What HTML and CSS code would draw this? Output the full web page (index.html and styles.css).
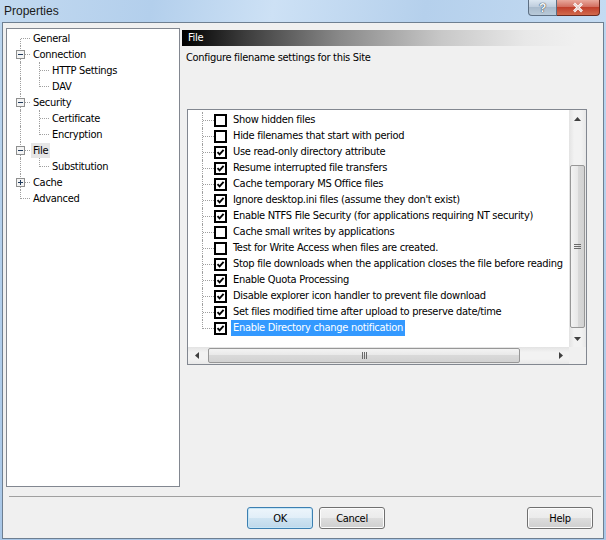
FILE: index.html
```html
<!DOCTYPE html>
<html lang="en">
<head>
    <meta charset="UTF-8">
    <title>Properties</title>
    <link rel="stylesheet" href="styles.css">
</head>
<body>
    <div class="window">
        <!-- Title bar -->
        <div class="titlebar">
            <span class="title">Properties</span>
            <div class="caption">
                <span class="cap cap-help">?</span>
                <span class="cap cap-close">
                    <svg width="14" height="11" viewBox="0 0 14 11"><path d="M3 1.5L11 9.5M11 1.5L3 9.5" stroke="#fff" stroke-width="2.6"/><path d="M3 1.5L11 9.5M11 1.5L3 9.5" stroke="#8a2b1c" stroke-width="1" opacity="0.35"/></svg>
                </span>
            </div>
        </div>

        <div class="client">
            <div class="main">
                <!-- Category tree -->
                <div class="tree">
                    <div class="row"><span class="g first"></span><span class="label">General</span></div>
                    <div class="row">
                        <svg class="exp" width="19" height="16" viewBox="0 0 19 16"><path class="dots" d="M9.5 0V4M9.5 13V16M14 8.5H19"/><rect x="5.5" y="4.5" width="8" height="8" class="box"/><path d="M7 8.5H12" stroke="#1f3a5c"/></svg>
                        <span class="label">Connection</span>
                    </div>
                    <div class="row"><span class="g pipe"></span><span class="g tee"></span><span class="label">HTTP Settings</span></div>
                    <div class="row"><span class="g pipe"></span><span class="g elbow"></span><span class="label">DAV</span></div>
                    <div class="row">
                        <svg class="exp" width="19" height="16" viewBox="0 0 19 16"><path class="dots" d="M9.5 0V4M9.5 13V16M14 8.5H19"/><rect x="5.5" y="4.5" width="8" height="8" class="box"/><path d="M7 8.5H12" stroke="#1f3a5c"/></svg>
                        <span class="label">Security</span>
                    </div>
                    <div class="row"><span class="g pipe"></span><span class="g tee"></span><span class="label">Certificate</span></div>
                    <div class="row"><span class="g pipe"></span><span class="g elbow"></span><span class="label">Encryption</span></div>
                    <div class="row">
                        <svg class="exp" width="19" height="16" viewBox="0 0 19 16"><path class="dots" d="M9.5 0V4M9.5 13V16M14 8.5H19"/><rect x="5.5" y="4.5" width="8" height="8" class="box"/><path d="M7 8.5H12" stroke="#1f3a5c"/></svg>
                        <span class="label selected">File</span>
                    </div>
                    <div class="row"><span class="g pipe"></span><span class="g elbow"></span><span class="label">Substitution</span></div>
                    <div class="row">
                        <svg class="exp" width="19" height="16" viewBox="0 0 19 16"><path class="dots" d="M9.5 0V4M9.5 13V16M14 8.5H19"/><rect x="5.5" y="4.5" width="8" height="8" class="box"/><path d="M7 8.5H12M9.5 6V11" stroke="#1f3a5c"/></svg>
                        <span class="label">Cache</span>
                    </div>
                    <div class="row"><span class="g elbow"></span><span class="label">Advanced</span></div>
                </div>

                <!-- Settings page -->
                <div class="pane">
                    <div class="pane-head">File</div>
                    <p class="pane-desc">Configure filename settings for this Site</p>

                    <div class="listbox">
                        <div class="list-area">
                            <div class="list-rows">
                                <div class="item"><span class="g tee"></span><span class="chk"></span><span class="text">Show hidden files</span></div>
                                <div class="item"><span class="g tee"></span><span class="chk"></span><span class="text">Hide filenames that start with period</span></div>
                                <div class="item"><span class="g tee"></span><span class="chk on"></span><span class="text">Use read-only directory attribute</span></div>
                                <div class="item"><span class="g tee"></span><span class="chk on"></span><span class="text">Resume interrupted file transfers</span></div>
                                <div class="item"><span class="g tee"></span><span class="chk on"></span><span class="text">Cache temporary MS Office files</span></div>
                                <div class="item"><span class="g tee"></span><span class="chk on"></span><span class="text">Ignore desktop.ini files (assume they don't exist)</span></div>
                                <div class="item"><span class="g tee"></span><span class="chk on"></span><span class="text">Enable NTFS File Security (for applications requiring NT security)</span></div>
                                <div class="item"><span class="g tee"></span><span class="chk"></span><span class="text">Cache small writes by applications</span></div>
                                <div class="item"><span class="g tee"></span><span class="chk"></span><span class="text">Test for Write Access when files are created.</span></div>
                                <div class="item"><span class="g tee"></span><span class="chk on"></span><span class="text">Stop file downloads when the application closes the file before reading</span></div>
                                <div class="item"><span class="g tee"></span><span class="chk on"></span><span class="text">Enable Quota Processing</span></div>
                                <div class="item"><span class="g tee"></span><span class="chk on"></span><span class="text">Disable explorer icon handler to prevent file download</span></div>
                                <div class="item"><span class="g tee"></span><span class="chk on"></span><span class="text">Set files modified time after upload to preserve date/time</span></div>
                                <div class="item"><span class="g elbow"></span><span class="chk on"></span><span class="text selected">Enable Directory change notification</span></div>
                            </div>
                            <div class="vscroll">
                                <span class="arrow"><svg width="7" height="4" viewBox="0 0 7 4"><path d="M3.5 0L7 4H0Z" fill="#404040"/></svg></span>
                                <span class="track-top"></span>
                                <span class="thumb v-thumb"><svg width="7" height="7" viewBox="0 0 7 7"><path d="M0 1.5H7M0 3.5H7M0 5.5H7" stroke="#6a6a6a"/></svg></span>
                                <span class="track-fill"></span>
                                <span class="arrow"><svg width="7" height="4" viewBox="0 0 7 4"><path d="M0 0H7L3.5 4Z" fill="#404040"/></svg></span>
                            </div>
                        </div>
                        <div class="hscroll-row">
                            <div class="hscroll">
                                <span class="arrow"><svg width="4" height="7" viewBox="0 0 4 7"><path d="M4 0V7L0 3.5Z" fill="#404040"/></svg></span>
                                <span class="track-left"></span>
                                <span class="thumb h-thumb"><svg width="7" height="7" viewBox="0 0 7 7"><path d="M1.5 0V7M3.5 0V7M5.5 0V7" stroke="#6a6a6a"/></svg></span>
                                <span class="track-fill"></span>
                                <span class="arrow"><svg width="4" height="7" viewBox="0 0 4 7"><path d="M0 0L4 3.5L0 7Z" fill="#404040"/></svg></span>
                            </div>
                            <div class="corner"></div>
                        </div>
                    </div>
                </div>
            </div>

            <div class="separator"></div>

            <div class="buttons">
                <button class="btn btn-default">OK</button>
                <button class="btn">Cancel</button>
                <button class="btn btn-help">Help</button>
            </div>
        </div>
    </div>
</body>
</html>
```

FILE: styles.css
```css
/* Global */
body {
    margin: 0;
    padding: 0;
    font-family: "DejaVu Sans Condensed", "Liberation Sans", sans-serif;
    font-size: 11px;
    letter-spacing: -0.3px;
    color: #000;
}

.window {
    width: 606px;
    height: 540px;
    display: flex;
    flex-direction: column;
    background: linear-gradient(to bottom, #bcd6ef, #a9c7e7);
    overflow: hidden;
}

/* Title bar */
.titlebar {
    height: 22px;
    display: flex;
    align-items: flex-start;
    background: linear-gradient(100deg, #c2d9f0 0%, #b3cfec 25%, #cde1f5 45%, #b5d0ec 70%, #c4dbf2 100%);
}

.title {
    font-family: "Liberation Sans", sans-serif;
    font-size: 12px;
    letter-spacing: 0;
    margin: 4px 0 0 4px;
    color: #1a1a1a;
}

.caption {
    margin-left: auto;
    margin-right: 6px;
    display: flex;
}

.cap {
    height: 16px;
    display: flex;
    align-items: center;
    justify-content: center;
    border: 1px solid #5d6f83;
    border-top: none;
    box-sizing: border-box;
}

.cap-help {
    width: 29px;
    border-radius: 0 0 0 4px;
    background: linear-gradient(to bottom, #dbe6f1, #bccbdb 50%, #a9bbcd 50%, #b9cad9);
    font-family: "Liberation Sans", sans-serif;
    font-weight: bold;
    font-size: 12px;
    color: #f4f7fa;
    text-shadow: 0 0 1px #2c3a48, 0 0 1px #2c3a48;
}

.cap-close {
    width: 43px;
    border-left: none;
    border-color: #6b2a20;
    border-radius: 0 0 4px 0;
    background: linear-gradient(to bottom, #e9a99c, #d0695a 50%, #c0402c 50%, #d26a4d);
}

/* Client area */
.client {
    flex: 1;
    margin: 0 2px 1px 2px;
    border: 1px solid #6e7f91;
    background: #f0f0f0;
    display: flex;
    flex-direction: column;
}

.main {
    display: flex;
    padding: 5px 0 0 3px;
}

/* Tree */
.tree {
    width: 174px;
    height: 459px;
    box-sizing: border-box;
    border: 1px solid #828790;
    background: #fff;
    padding: 1px 0 0 4px;
}

.row,
.item {
    display: flex;
    align-items: center;
    height: 16px;
}

.label {
    margin-left: 1px;
    padding: 0 2px;
    line-height: 15px;
}

.label.selected {
    background: #e6e6e6;
}

/* Tree connector lines */
.g {
    display: grid;
    grid-template-columns: 10px 9px;
    grid-template-rows: 9px 7px;
    width: 19px;
    height: 16px;
    flex: none;
}

.g::before,
.g::after {
    content: "";
    border: 0 dotted #a0a0a0;
}

.g.tee::before,
.g.pipe::before {
    grid-row: 1 / 3;
    grid-column: 1;
    border-right-width: 1px;
}

.g.elbow::before {
    grid-row: 1;
    grid-column: 1;
    border-right-width: 1px;
}

.g.first::before {
    grid-row: 2;
    grid-column: 1;
    border-right-width: 1px;
}

.g.tee::after,
.g.elbow::after,
.g.first::after {
    grid-row: 1;
    grid-column: 2;
    border-bottom-width: 1px;
}

.g.pipe::after {
    content: none;
}

.exp {
    flex: none;
    display: block;
    shape-rendering: crispEdges;
}

.exp .dots {
    stroke: #a0a0a0;
    stroke-dasharray: 1 1;
    fill: none;
}

.exp .box {
    fill: #f4f4f4;
    stroke: #8e8f8f;
}

/* Right pane */
.pane {
    width: 419px;
    margin: 2px 0 0 2px;
}

.pane-head {
    height: 16px;
    line-height: 16px;
    padding-left: 6px;
    color: #fff;
    background: linear-gradient(to right, #000 0%, #3c3c3c 15%, #8a8a8a 38%, #c8c8c8 62%, #e8e8e8 82%, #f0f0f0 94%);
}

.pane-desc {
    margin: 5px 0 0 4px;
    line-height: 14px;
}

/* Option list */
.listbox {
    width: 400px;
    height: 256px;
    box-sizing: border-box;
    margin: 44px 0 0 5px;
    border: 1px solid #828790;
    background: #fff;
    display: flex;
    flex-direction: column;
}

.list-area {
    flex: 1;
    display: flex;
    overflow: hidden;
}

.list-rows {
    flex: 1;
    padding: 2px 0 0 5px;
    overflow: hidden;
    white-space: nowrap;
}

.item .g {
    grid-template-columns: 10px 11px;
    width: 21px;
}

.chk {
    width: 13px;
    height: 13px;
    box-sizing: border-box;
    border: 2px solid #000;
    background: #fff center / 9px 9px no-repeat;
    flex: none;
}

.chk.on {
    background-image: url("data:image/svg+xml,%3Csvg xmlns='http://www.w3.org/2000/svg' viewBox='0 0 9 9'%3E%3Cpath d='M1.5 4.2L3.6 6.4L7.6 1.8' fill='none' stroke='%23000' stroke-width='1.9'/%3E%3C/svg%3E");
}

.text {
    margin-left: 4px;
    padding: 0 2px;
    line-height: 16px;
}

.text.selected {
    background: #3399ff;
    color: #fff;
}

/* Scroll bars */
.vscroll {
    width: 17px;
    flex: none;
    display: flex;
    flex-direction: column;
    background: linear-gradient(to right, #e3e3e3, #f2f2f2 30%, #f2f2f2 70%, #e8e8e8);
}

.arrow {
    width: 17px;
    height: 17px;
    flex: none;
    display: flex;
    align-items: center;
    justify-content: center;
}

.track-top {
    height: 38px;
    flex: none;
}

.track-left {
    width: 3px;
    flex: none;
}

.track-fill {
    flex: 1;
}

.thumb {
    box-sizing: border-box;
    border: 1px solid #979797;
    border-radius: 2px;
    display: flex;
    align-items: center;
    justify-content: center;
    flex: none;
}

.v-thumb {
    height: 163px;
    margin: 0 1px;
    background: linear-gradient(to right, #f3f3f3, #e8e8e8 50%, #d9d9d9 50%, #d2d2d2);
}

.hscroll-row {
    height: 17px;
    display: flex;
}

.hscroll {
    flex: 1;
    display: flex;
    background: linear-gradient(to bottom, #e3e3e3, #f2f2f2 30%, #f2f2f2 70%, #e8e8e8);
}

.h-thumb {
    width: 312px;
    margin: 1px 0;
    background: linear-gradient(to bottom, #f3f3f3, #e8e8e8 50%, #d9d9d9 50%, #d2d2d2);
}

.corner {
    width: 17px;
    background: #f0f0f0;
}

/* Bottom */
.separator {
    height: 1px;
    margin: 9px 2px 0 6px;
    background: #a0a0a0;
}

.buttons {
    display: flex;
    gap: 6px;
    margin: 10px 10px 0 244px;
}

.btn {
    width: 66px;
    height: 22px;
    padding: 0;
    font-family: inherit;
    font-size: 11px;
    letter-spacing: inherit;
    color: #000;
    border: 1px solid #707070;
    border-radius: 3px;
    box-shadow: inset 0 0 0 1px #fcfcfc;
    background: linear-gradient(to bottom, #f2f2f2 0%, #ebebeb 50%, #dddddd 50%, #cfcfcf 100%);
}

.btn-default {
    border-color: #3c7fb1;
    box-shadow: inset 0 0 0 1px #c4e5f6;
    background: linear-gradient(to bottom, #edf5fb 0%, #e1eef8 50%, #cfe4f2 50%, #bfd8ea 100%);
}

.btn-help {
    margin-left: auto;
}
```
